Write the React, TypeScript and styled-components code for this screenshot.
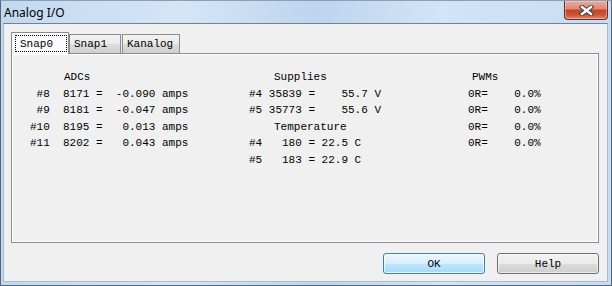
import styled, { createGlobalStyle } from 'styled-components';

const GlobalStyle = createGlobalStyle`
  html, body {
    margin: 0;
    padding: 0;
    background: #fff;
  }
  body {
    width: 612px;
    height: 286px;
    overflow: hidden;
  }
`;

const Window = styled.div`
  width: 612px;
  height: 286px;
  box-sizing: border-box;
  display: flex;
  flex-direction: column;
  border: 1px solid #55657a;
  border-top-color: #8aa0b8;
  background: linear-gradient(
    90deg,
    #c3d8ef 0%,
    #d4e5f7 30%,
    #bdd5ee 52%,
    #d2e4f7 72%,
    #c8dcf2 100%
  );
`;

const TitleBar = styled.div`
  height: 22px;
  display: flex;
  justify-content: space-between;
  align-items: flex-start;
  flex-shrink: 0;
`;

const Title = styled.div`
  padding: 4px 0 0 3px;
  font-family: "Noto Sans", "Liberation Sans", sans-serif;
  font-size: 12px;
  line-height: 16px;
  color: #000;
`;

const CloseButton = styled.div`
  width: 44px;
  height: 19px;
  margin-right: 3px;
  box-sizing: border-box;
  display: flex;
  align-items: center;
  justify-content: center;
  border: 1px solid #6e2a22;
  border-top: none;
  border-radius: 0 0 4px 4px;
  background: linear-gradient(
    #ebab9c 0%,
    #dd8a77 42%,
    #c4442b 52%,
    #c9553a 78%,
    #e28a6b 100%
  );
  box-shadow: inset 0 0 0 1px rgba(255, 220, 210, 0.45);
`;

const Client = styled.div`
  flex: 1;
  margin: 0 3px 3px 2px;
  border: 1px solid #a8bbcf;
  border-top-color: #6f8296;
  background: #f0f0f0;
  padding: 8px 8px 0 7px;
  display: flex;
  flex-direction: column;
`;

const TabStrip = styled.div`
  height: 22px;
  margin-bottom: -1px;
  display: flex;
  align-items: flex-end;
  position: relative;
  z-index: 1;
`;

const Tab = styled.div<{ $active?: boolean; $width: number; $gap?: number }>`
  box-sizing: border-box;
  width: ${(p) => p.$width}px;
  height: ${(p) => (p.$active ? 22 : 19)}px;
  margin-bottom: ${(p) => (p.$active ? 0 : 1)}px;
  margin-left: ${(p) => p.$gap ?? 0}px;
  border: 1px solid #898c95;
  border-bottom: none;
  display: flex;
  align-items: stretch;
  padding: ${(p) => (p.$active ? '2px 1px 2px 3px' : '0 0 0 4px')};
  background: ${(p) =>
    p.$active ? '#fcfcfc' : 'linear-gradient(#f3f3f3 0%, #ebebeb 50%, #dddddd 51%, #cfcfcf 100%)'};
  font-family: "Liberation Mono", monospace;
  font-size: 11px;
  color: #000;
`;

const TabLabel = styled.span<{ $focused?: boolean }>`
  flex: 1;
  display: flex;
  align-items: center;
  padding-left: ${(p) => (p.$focused ? 4 : 0)}px;
  border: ${(p) => (p.$focused ? '1px dotted #000' : 'none')};
`;

const Panel = styled.div`
  height: 190px;
  box-sizing: border-box;
  border: 1px solid #898c95;
  box-shadow: inset 1px 1px 0 #fff, inset -1px -1px 0 #fff;
  background: #f0f0f0;
  padding: 15px 0 0 18px;
  display: flex;
`;

const Column = styled.div<{ $width?: number }>`
  width: ${(p) => (p.$width ? `${p.$width}px` : 'auto')};
  flex: ${(p) => (p.$width ? '0 0 auto' : '1 1 auto')};
  display: flex;
  flex-direction: column;
`;

const Line = styled.div<{ $indent?: number }>`
  white-space: pre;
  font-family: "Liberation Mono", monospace;
  font-size: 11px;
  line-height: 16.6px;
  padding-left: ${(p) => p.$indent ?? 0}px;
  color: #000;
`;

const ButtonRow = styled.div`
  margin-top: 10px;
  display: flex;
  justify-content: flex-end;
  gap: 12px;
`;

const Button = styled.button<{ $primary?: boolean }>`
  width: 102px;
  height: 21px;
  padding: 0;
  border-radius: 3px;
  font-family: "Liberation Mono", monospace;
  font-size: 11px;
  color: #000;
  border: 1px solid ${(p) => (p.$primary ? '#3c7fb1' : '#707070')};
  background: ${(p) =>
    p.$primary
      ? 'linear-gradient(#eaf6fd 0%, #d9f0fc 50%, #bee6fd 51%, #a7d9f5 100%)'
      : 'linear-gradient(#f2f2f2 0%, #ebebeb 50%, #dddddd 51%, #cfcfcf 100%)'};
  box-shadow: inset 0 0 0 1px ${(p) => (p.$primary ? 'rgba(255,255,255,0.7)' : 'rgba(255,255,255,0.6)')};
`;

const adcs = [
  ' #8  8171 =  -0.090 amps',
  ' #9  8181 =  -0.047 amps',
  '#10  8195 =   0.013 amps',
  '#11  8202 =   0.043 amps',
];

const supplies = ['#4 35839 =    55.7 V', '#5 35773 =    55.6 V'];
const temps = ['#4   180 = 22.5 C', '#5   183 = 22.9 C'];
const pwms = ['0R=    0.0%', '0R=    0.0%', '0R=    0.0%', '0R=    0.0%'];

function CloseGlyph() {
  return (
    <svg width="15" height="11" viewBox="0 0 15 11">
      <path d="M3 2 L12 9 M12 2 L3 9" stroke="#3d3d3d" strokeWidth="4.4" strokeLinecap="square" />
      <path d="M3 2 L12 9 M12 2 L3 9" stroke="#fff" strokeWidth="2.4" strokeLinecap="square" />
    </svg>
  );
}

export default function App() {
  return (
    <>
      <GlobalStyle />
      <Window>
        <TitleBar>
          <Title>Analog I/O</Title>
          <CloseButton>
            <CloseGlyph />
          </CloseButton>
        </TitleBar>
        <Client>
          <TabStrip>
            <Tab $active $width={58}>
              <TabLabel $focused>Snap0</TabLabel>
            </Tab>
            <Tab $width={52}>
              <TabLabel>Snap1</TabLabel>
            </Tab>
            <Tab $width={58} $gap={1}>
              <TabLabel>Kanalog</TabLabel>
            </Tab>
          </TabStrip>
          <Panel>
            <Column $width={219}>
              <Line $indent={34}>ADCs</Line>
              {adcs.map((l, i) => (
                <Line key={i}>{l}</Line>
              ))}
            </Column>
            <Column $width={219}>
              <Line $indent={25}>Supplies</Line>
              {supplies.map((l, i) => (
                <Line key={i}>{l}</Line>
              ))}
              <Line $indent={25}>Temperature</Line>
              {temps.map((l, i) => (
                <Line key={i}>{l}</Line>
              ))}
            </Column>
            <Column>
              <Line $indent={4}>PWMs</Line>
              {pwms.map((l, i) => (
                <Line key={i}>{l}</Line>
              ))}
            </Column>
          </Panel>
          <ButtonRow>
            <Button $primary>OK</Button>
            <Button>Help</Button>
          </ButtonRow>
        </Client>
      </Window>
    </>
  );
}
